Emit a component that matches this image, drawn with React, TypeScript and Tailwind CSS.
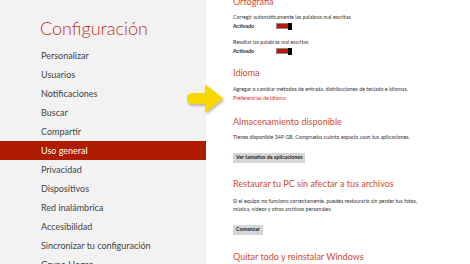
const menu = [
  'Personalizar',
  'Usuarios',
  'Notificaciones',
  'Buscar',
  'Compartir',
  'Uso general',
  'Privacidad',
  'Dispositivos',
  'Red inalámbrica',
  'Accesibilidad',
  'Sincronizar tu configuración',
  'Grupo Hogar',
];

function Toggle() {
  return (
    <div className="flex items-center">
      <div className="h-[6px] w-[13px] border border-[#8a8a8a] bg-[#c0170a]" />
      <div className="ml-[-1px] h-[7px] w-[4px] bg-black" />
    </div>
  );
}

function Heading({ children, className = '' }: { children: React.ReactNode; className?: string }) {
  return (
    <h2 className={`whitespace-nowrap text-[9px] leading-[16px] text-[#d24a33] ${className}`}>{children}</h2>
  );
}

function Small({ children, className = '' }: { children: React.ReactNode; className?: string }) {
  return <p className={`whitespace-nowrap text-[5.3px] leading-[8px] text-[#333] ${className}`}>{children}</p>;
}

function Switch({ className = '' }: { className?: string }) {
  return (
    <div className={`flex h-[8px] items-center ${className}`}>
      <span className="w-[43px] text-[5.3px] font-bold leading-[8px] text-[#222]">Activado</span>
      <Toggle />
    </div>
  );
}

function Button({ children, className = '' }: { children: React.ReactNode; className?: string }) {
  return (
    <div
      className={`inline-flex h-[10px] items-center bg-[#d6d6d6] px-[3px] text-[5.3px] font-bold text-[#222] ${className}`}
    >
      {children}
    </div>
  );
}

export default function App() {
  return (
    <div
      className="relative flex h-[264px] w-[470px] overflow-hidden bg-white"
      style={{ fontFamily: 'Lato, "Open Sans", sans-serif' }}
    >
      <aside className="w-[206px] shrink-0 bg-[#f2f2f2] pt-[14px]">
        <h1 className="pl-[40px] text-[18px] font-light leading-[28px] text-[#b8321f]">Configuración</h1>
        <ul className="mt-[4px]">
          {menu.map((item) => (
            <li
              key={item}
              className={`h-[19px] pl-[41px] text-[9px] leading-[19px] ${
                item === 'Uso general' ? 'bg-[#ae1c00] text-white' : 'text-[#444]'
              }`}
            >
              {item}
            </li>
          ))}
        </ul>
      </aside>

      <main className="flex-1 pl-[27px]">
        <div className="mt-[-6px]">
          <Heading>Ortografía</Heading>
          <Small className="mt-[3px]">Corregir automáticamente las palabras mal escritas</Small>
          <Switch className="mt-[1px]" />
          <Small className="mt-[8px]">Resaltar las palabras mal escritas</Small>
          <Switch className="mt-[1px]" />

          <Heading className="mt-[10px]">Idioma</Heading>
          <Small className="mt-[4px]">
            Agregar o cambiar métodos de entrada, distribuciones de teclado e idiomas.
          </Small>
          <p className="mt-[1px] text-[5.3px] leading-[8px] text-[#e0301e]">Preferencias de idioma</p>

          <Heading className="mt-[12px]">Almacenamiento disponible</Heading>
          <Small className="mt-[3px]">
            Tienes disponible 349 GB. Comprueba cuánto espacio usan tus aplicaciones.
          </Small>
          <Button className="mt-[1px]">Ver tamaños de aplicaciones</Button>

          <Heading className="mt-[11px]">Restaurar tu PC sin afectar a tus archivos</Heading>
          <Small className="mt-[5px] leading-[7px]">
            Si el equipo no funciona correctamente, puedes restaurarlo sin perder tus fotos,
            <br />
            música, vídeos y otros archivos personales.
          </Small>
          <Button className="mt-[3px]">Comenzar</Button>

          <Heading className="mt-[12px]">Quitar todo y reinstalar Windows</Heading>
          <Small className="mt-[2px]">
            Si quieres reciclar tu equipo o empezar de nuevo completamente, puedes
            <br />
            restablecerlo a sus valores de fábrica.
          </Small>
          <Button className="mt-[3px]">Comenzar</Button>
        </div>
      </main>

      <svg
        className="absolute left-[187px] top-[84px] drop-shadow-[1px_2px_1px_rgba(0,0,0,0.25)]"
        width="38"
        height="30"
        viewBox="0 0 38 30"
      >
        <path
          d="M5 10 H19 V2 L35 14.5 L19 27 V19 H5 A4.5 4.5 0 0 1 5 10 Z"
          fill="#f8d800"
          stroke="#f8d800"
          strokeWidth="2"
          strokeLinejoin="round"
        />
      </svg>
    </div>
  );
}
